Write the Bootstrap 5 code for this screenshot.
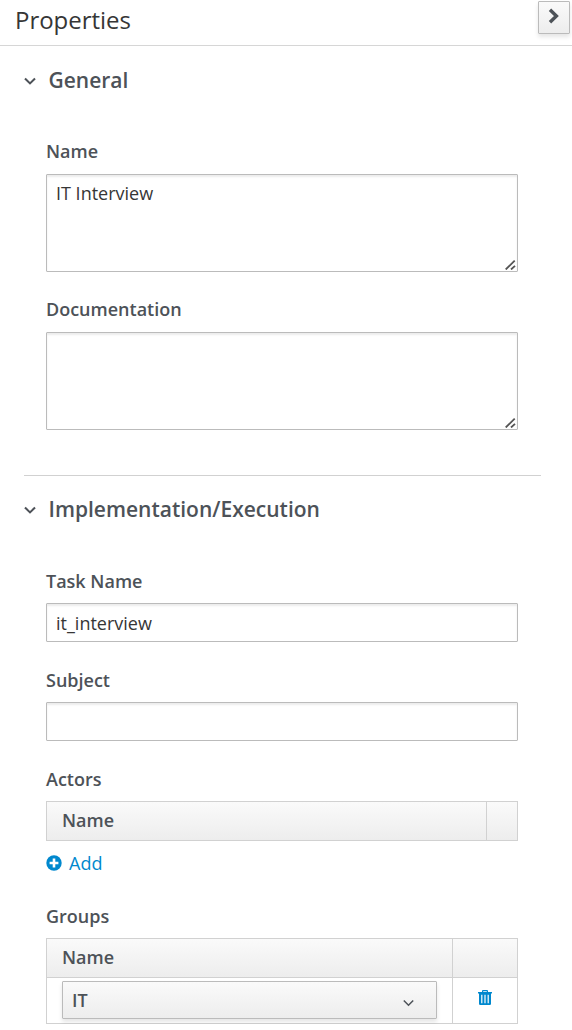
<!DOCTYPE html>
<html lang="en">
<head>
<meta charset="utf-8">
<title>Properties</title>
<meta name="viewport" content="width=device-width, initial-scale=1">
<link rel="stylesheet" href="https://cdn.jsdelivr.net/npm/bootstrap@5.3.0/dist/css/bootstrap.min.css">
<style>
body{font-family:"Open Sans",sans-serif;font-size:18px;line-height:30px;color:#363636;background:#fff;overflow:hidden}
.panel-head{height:46px;border-bottom:1px solid #d6d6d6;padding-left:15px}
.panel-title{font-size:24px;line-height:40px;font-weight:400;color:#363636;letter-spacing:-.04px}
.collapse-btn{width:32px;height:33px;margin:1px 2px 0 0;border:1px solid #bbb;border-radius:1px;background:linear-gradient(#fafafa,#ededed);box-shadow:0 3px 4px rgba(3,3,3,.1)}
.collapse-btn svg{margin-bottom:3px}
.section-title{font-size:21px;line-height:30px;font-weight:600;color:#4d5258;padding-left:24px;gap:12.5px}
.section-title svg{margin-top:2px}
.fields{padding:0 54px 0 46px}
.field-label{display:block;font-weight:600;color:#4d5258;line-height:30px;margin-bottom:8px}
.form-control,.form-control:focus{font-size:18px;line-height:30px;color:#363636;border:1px solid #bbb;border-radius:1px;padding:3px 9px;box-shadow:inset 0 2px 2px rgba(3,3,3,.075);resize:none}
input.form-control{height:39px}
textarea.form-control{height:98px;display:block}
.grip{right:2px;bottom:2px}
.divider{height:1px;background:#d1d1d1;margin:45px 31px 0 24px}
.grid-head,.grid-row{border:1px solid #d1d1d1}
.grid-head{height:40px;background:linear-gradient(#fafafa,#ededed);font-weight:600;color:#4d5258}
.grid-head .cell-main{padding-bottom:2px}
.grid-row{height:46px;border-top:0}
.cell-main{padding-left:15px}
.cell-end{border-left:1px solid #d1d1d1}
.narrow{width:31px}.wide{width:65px}
.add-link{color:#0088ce;gap:7px;line-height:30px}
.picker{width:375px;height:38px;margin-top:3px;padding:0 22px 0 9px;border:1px solid #bbb;border-radius:1px;background:linear-gradient(#fafafa,#ededed);box-shadow:0 3px 4px rgba(3,3,3,.1);font-weight:600;color:#4d5258}
</style>
<script src="https://cdn.jsdelivr.net/npm/bootstrap@5.3.0/dist/js/bootstrap.bundle.min.js"></script>
</head>
<body>
<header class="panel-head d-flex justify-content-between align-items-start">
  <h1 class="panel-title m-0">Properties</h1>
  <button class="collapse-btn d-flex align-items-center justify-content-center p-0" aria-label="Collapse">
    <svg width="12" height="16" viewBox="0 0 12 16" fill="none" stroke="#4d5258" stroke-width="3.4"><path d="M2 1.8 8.4 8 2 14.2"/></svg>
  </button>
</header>
<main>
  <section>
    <h2 class="section-title d-flex align-items-center mb-0" style="margin-top:19px">
      <svg width="12" height="8" viewBox="0 0 12 8" fill="none" stroke="#4d5258" stroke-width="2.1"><path d="M1 1.6 6 6.4 11 1.6"/></svg>General</h2>
    <div class="fields" style="padding-top:41px">
      <label class="field-label" for="n">Name</label>
      <div class="position-relative"><textarea id="n" class="form-control">IT Interview</textarea>
        <svg class="grip position-absolute" width="11" height="10" viewBox="0 0 11 10" fill="none" stroke="#555" stroke-width="1.8"><path d="M.7 9.5 9.7.7M6 9.5 10 5.8"/></svg></div>
      <label class="field-label" for="d" style="margin-top:22px">Documentation</label>
      <div class="position-relative"><textarea id="d" class="form-control"></textarea>
        <svg class="grip position-absolute" width="11" height="10" viewBox="0 0 11 10" fill="none" stroke="#555" stroke-width="1.8"><path d="M.7 9.5 9.7.7M6 9.5 10 5.8"/></svg></div>
    </div>
  </section>
  <div class="divider"></div>
  <section>
    <h2 class="section-title d-flex align-items-center mb-0" style="margin-top:18px">
      <svg width="12" height="8" viewBox="0 0 12 8" fill="none" stroke="#4d5258" stroke-width="2.1"><path d="M1 1.6 6 6.4 11 1.6"/></svg>Implementation/Execution</h2>
    <div class="fields" style="padding-top:42px">
      <label class="field-label mb-0" for="t" style="height:37px">Task Name</label>
      <input id="t" class="form-control" value="it_interview">
      <label class="field-label" for="s" style="margin-top:23px;margin-bottom:7px">Subject</label>
      <input id="s" class="form-control">
      <div class="field-label" style="margin-top:23px;margin-bottom:7px">Actors</div>
      <div class="grid-head d-flex align-items-stretch">
        <div class="cell-main flex-grow-1 d-flex align-items-center">Name</div><div class="cell-end narrow"></div>
      </div>
      <a class="add-link d-flex align-items-center text-decoration-none" href="#" style="margin-top:7px">
        <svg width="16" height="16" viewBox="0 0 16 16"><circle cx="8" cy="8" r="7.7" fill="#0088ce"/><path d="M8 3.6v8.8M3.6 8h8.8" stroke="#fff" stroke-width="2.6"/></svg>Add</a>
      <div class="field-label" style="margin-top:23px;margin-bottom:7px">Groups</div>
      <div class="grid-head d-flex align-items-stretch">
        <div class="cell-main flex-grow-1 d-flex align-items-center">Name</div><div class="cell-end wide"></div>
      </div>
      <div class="grid-row d-flex align-items-stretch">
        <div class="cell-main flex-grow-1">
          <div class="picker d-flex align-items-center justify-content-between">IT
            <svg width="11" height="8" viewBox="0 0 11 8" fill="none" stroke="#4d5258" stroke-width="1.5" style="margin-top:6px"><path d="M.8 1.4 5.5 6.2 10.2 1.4"/></svg></div>
        </div>
        <div class="cell-end wide d-flex justify-content-center" style="padding-top:12px">
          <svg width="14" height="16" viewBox="0 0 14 16" fill="#0088ce"><path fill-rule="evenodd" d="M4 2V1.200Q4 .1 5 .1h4q1 0 1 1.100V2h4v1.600h-1v10.200q0 1.200-1.200 1.200H2.200Q1 15 1 13.800V3.600H0V2zM5.200 2h3.600v-.8H5.200zM3.200 4.800v8.500h1.200V4.800zM6.400 4.800v8.500h1.200V4.800zM9.600 4.800v8.500h1.200V4.800z"/></svg>
        </div>
      </div>
    </div>
  </section>
</main>
</body>
</html>
